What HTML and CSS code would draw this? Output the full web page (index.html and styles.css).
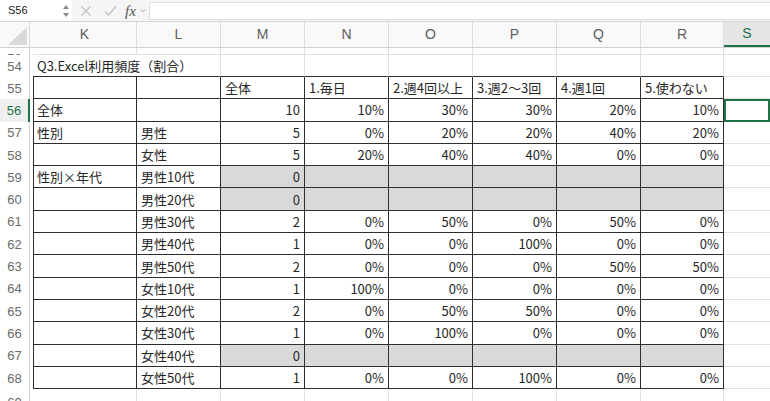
FILE: index.html
```html
<!DOCTYPE html>
<html lang="ja">
<head>
<meta charset="utf-8">
<title>Excel</title>
<link rel="stylesheet" href="styles.css">
</head>
<body>
<div class="fbar">
  <div class="namebox">S56</div>
  <div class="spin">
    <svg width="6" height="14" viewBox="0 0 6 14"><path d="M0 5 L3 1 L6 5 Z" fill="#8a8a8a"/><path d="M0 9 L3 13 L6 9 Z" fill="#8a8a8a"/></svg>
  </div>
  <div class="ficon x"><svg width="12" height="12" viewBox="0 0 12 12"><path d="M1.5 1.5 L10.5 10.5 M10.5 1.5 L1.5 10.5" stroke="#c4c4c4" stroke-width="1.4" fill="none"/></svg></div>
  <div class="ficon ok"><svg width="13" height="12" viewBox="0 0 13 12"><path d="M1 6.5 L4.5 10 L12 1.5" stroke="#c4c4c4" stroke-width="1.4" fill="none"/></svg></div>
  <div class="fx">fx</div>
  <div class="chev"><svg width="6" height="5" viewBox="0 0 6 5"><path d="M0.5 1 L3 4 L5.5 1" stroke="#b5b5b5" stroke-width="1" fill="none"/></svg></div>
  <div class="finput"></div>
</div>

<div class="sheet">
  <div class="row hdr">
    <div class="corner"><svg width="33" height="26" viewBox="0 0 33 26"><path d="M8 23 L27 23 L27 5 Z" fill="#d9d9d9"/></svg></div>
    <div class="ch">K</div><div class="ch">L</div><div class="ch">M</div><div class="ch">N</div><div class="ch">O</div><div class="ch">P</div><div class="ch">Q</div><div class="ch">R</div><div class="ch selh">S</div>
  </div>

  <div class="row r53">
    <div class="rn rn-bot"><span>53</span></div>
    <div class="c"></div><div class="c"></div><div class="c"></div><div class="c"></div><div class="c"></div><div class="c"></div><div class="c"></div><div class="c"></div><div class="c last"></div>
  </div>

  <div class="row r54">
    <div class="rn">54</div>
    <div class="c tb over">Q3.Excel利用頻度（割合）</div><div class="c tb"></div><div class="c tb"></div><div class="c tb"></div><div class="c tb"></div><div class="c tb"></div><div class="c tb"></div><div class="c tb"></div><div class="c last"></div>
  </div>

  <div class="row rd">
    <div class="rn">55</div>
    <div class="c t k"></div><div class="c t"></div><div class="c t">全体</div><div class="c t">1.毎日</div><div class="c t">2.週4回以上</div><div class="c t">3.週2〜3回</div><div class="c t">4.週1回</div><div class="c t">5.使わない</div><div class="c last"></div>
  </div>

  <div class="row rd">
    <div class="rn rsel">56</div>
    <div class="c t k">全体</div><div class="c t"></div><div class="c t n">10</div><div class="c t n">10%</div><div class="c t n">30%</div><div class="c t n">30%</div><div class="c t n">20%</div><div class="c t n">10%</div><div class="c last sel"></div>
  </div>

  <div class="row rd">
    <div class="rn">57</div>
    <div class="c t k">性別</div><div class="c t">男性</div><div class="c t n">5</div><div class="c t n">0%</div><div class="c t n">20%</div><div class="c t n">20%</div><div class="c t n">40%</div><div class="c t n">20%</div><div class="c last"></div>
  </div>

  <div class="row rd">
    <div class="rn">58</div>
    <div class="c t k"></div><div class="c t">女性</div><div class="c t n">5</div><div class="c t n">20%</div><div class="c t n">40%</div><div class="c t n">40%</div><div class="c t n">0%</div><div class="c t n">0%</div><div class="c last"></div>
  </div>

  <div class="row rd">
    <div class="rn">59</div>
    <div class="c t k">性別×年代</div><div class="c t">男性10代</div><div class="c t n g">0</div><div class="c t g"></div><div class="c t g"></div><div class="c t g"></div><div class="c t g"></div><div class="c t g"></div><div class="c last"></div>
  </div>

  <div class="row rd">
    <div class="rn">60</div>
    <div class="c t k"></div><div class="c t">男性20代</div><div class="c t n g">0</div><div class="c t g"></div><div class="c t g"></div><div class="c t g"></div><div class="c t g"></div><div class="c t g"></div><div class="c last"></div>
  </div>

  <div class="row rd">
    <div class="rn">61</div>
    <div class="c t k"></div><div class="c t">男性30代</div><div class="c t n">2</div><div class="c t n">0%</div><div class="c t n">50%</div><div class="c t n">0%</div><div class="c t n">50%</div><div class="c t n">0%</div><div class="c last"></div>
  </div>

  <div class="row rd">
    <div class="rn">62</div>
    <div class="c t k"></div><div class="c t">男性40代</div><div class="c t n">1</div><div class="c t n">0%</div><div class="c t n">0%</div><div class="c t n">100%</div><div class="c t n">0%</div><div class="c t n">0%</div><div class="c last"></div>
  </div>

  <div class="row rd">
    <div class="rn">63</div>
    <div class="c t k"></div><div class="c t">男性50代</div><div class="c t n">2</div><div class="c t n">0%</div><div class="c t n">0%</div><div class="c t n">0%</div><div class="c t n">50%</div><div class="c t n">50%</div><div class="c last"></div>
  </div>

  <div class="row rd">
    <div class="rn">64</div>
    <div class="c t k"></div><div class="c t">女性10代</div><div class="c t n">1</div><div class="c t n">100%</div><div class="c t n">0%</div><div class="c t n">0%</div><div class="c t n">0%</div><div class="c t n">0%</div><div class="c last"></div>
  </div>

  <div class="row rd">
    <div class="rn">65</div>
    <div class="c t k"></div><div class="c t">女性20代</div><div class="c t n">2</div><div class="c t n">0%</div><div class="c t n">50%</div><div class="c t n">50%</div><div class="c t n">0%</div><div class="c t n">0%</div><div class="c last"></div>
  </div>

  <div class="row rd">
    <div class="rn">66</div>
    <div class="c t k"></div><div class="c t">女性30代</div><div class="c t n">1</div><div class="c t n">0%</div><div class="c t n">100%</div><div class="c t n">0%</div><div class="c t n">0%</div><div class="c t n">0%</div><div class="c last"></div>
  </div>

  <div class="row rd">
    <div class="rn">67</div>
    <div class="c t k"></div><div class="c t">女性40代</div><div class="c t n g">0</div><div class="c t g"></div><div class="c t g"></div><div class="c t g"></div><div class="c t g"></div><div class="c t g"></div><div class="c last"></div>
  </div>

  <div class="row rd">
    <div class="rn">68</div>
    <div class="c t k"></div><div class="c t">女性50代</div><div class="c t n">1</div><div class="c t n">0%</div><div class="c t n">0%</div><div class="c t n">100%</div><div class="c t n">0%</div><div class="c t n">0%</div><div class="c last"></div>
  </div>

  <div class="row r69">
    <div class="rn rn-top"><span>69</span></div>
    <div class="c"></div><div class="c"></div><div class="c"></div><div class="c"></div><div class="c"></div><div class="c"></div><div class="c"></div><div class="c"></div><div class="c last"></div>
  </div>
</div>
</body>
</html>
```
FILE: styles.css
```css
* { box-sizing: border-box; }
html, body {
  margin: 0;
  padding: 0;
  width: 770px;
  height: 401px;
  overflow: hidden;
  background: #ffffff;
  font-family: "Noto Sans CJK JP", "Noto Sans", sans-serif;
  color: #262626;
}

/* formula bar */
.fbar {
  height: 22px;
  display: flex;
  align-items: center;
  background: #f5f5f5;
  border-bottom: 1px solid #d6d6d6;
}
.namebox {
  width: 60px;
  height: 21px;
  background: #ffffff;
  font-family: "Liberation Sans", Arial, sans-serif;
  font-size: 11px;
  line-height: 21px;
  padding-left: 8px;
  color: #222;
}
.spin {
  width: 12px;
  height: 21px;
  display: flex;
  align-items: center;
  justify-content: center;
  background: #ffffff;
}
.ficon {
  display: flex;
  align-items: center;
}
.ficon.x { margin-left: 8px; }
.ficon.ok { margin-left: 12px; }
.fx {
  margin-left: 8px;
  font-family: "Liberation Serif", "DejaVu Serif", serif;
  font-style: italic;
  font-size: 15px;
  color: #555;
  line-height: 20px;
}
.chev {
  margin-left: 4px;
  display: flex;
  align-items: center;
}
.finput {
  margin-left: 3px;
  flex: 1;
  height: 18px;
  background: #ffffff;
  border: 1px solid #dedede;
  border-right: none;
}

/* sheet grid */
.row {
  display: grid;
  grid-template-columns: 33px 104px 84px 84px 84px 84px 84px 84px 83px 1fr;
}
.hdr {
  height: 26px;
  background: #f9f9f9;
  border-bottom: 1px solid #d2d2d2;
}
.corner {
  height: 25px;
  border-right: 1px solid #d6d6d6;
  margin-right: 3px;
  overflow: hidden;
}
.corner svg { display: block; }
.ch {
  border-right: 1px solid #dcdcdc;
  text-align: center;
  font-family: "Liberation Sans", Arial, sans-serif;
  font-size: 14px;
  line-height: 25px;
  color: #5e5e5e;
}
.ch.selh {
  background: #e6e6e6;
  color: #217346;
  border-right: none;
  border-bottom: 2px solid #217346;
  line-height: 23px;
}

.r53 { height: 7px; overflow: hidden; }
.r54 { height: 22px; }
.rd { height: 22.3px; }
.r69 { height: 14px; overflow: hidden; }

.rn {
  margin-right: 3px;
  border-right: 1px solid #d6d6d6;
  font-family: "Liberation Sans", Arial, sans-serif;
  font-size: 13px;
  color: #6b6b6b;
  display: flex;
  align-items: center;
  justify-content: center;
  overflow: hidden;
  background: #ffffff;
}
.rn-bot { align-items: flex-end; }
.rn-bot span { line-height: 13px; margin-bottom: -10px; }
.rn-top { align-items: flex-start; }
.rn-top span { line-height: 13px; margin-top: 7px; }
.rn.rsel {
  color: #217346;
  border-right: 2px solid #217346;
  background: #f0f0f0;
}

.c {
  border-right: 1px solid #e1e1e1;
  border-bottom: 1px solid #e1e1e1;
  font-size: 13px;
  padding: 0 3px 0 4px;
  display: flex;
  align-items: center;
  white-space: nowrap;
  overflow: hidden;
  min-width: 0;
}
.c.last { border-right: none; }
.c.over { overflow: visible; border-right: none; }
.c.tb { border-bottom-color: #2e2e2e; }
.c.t {
  border-right-color: #2e2e2e;
  border-bottom-color: #2e2e2e;
}
.c.k { border-left: 1px solid #2e2e2e; padding-left: 3px; }
.c.n { justify-content: flex-end; padding-right: 4px; }
.c.g { background: #d9d9d9; }
.c.sel {
  border: none;
  box-shadow: inset 0 0 0 2px #217346;
}
```
